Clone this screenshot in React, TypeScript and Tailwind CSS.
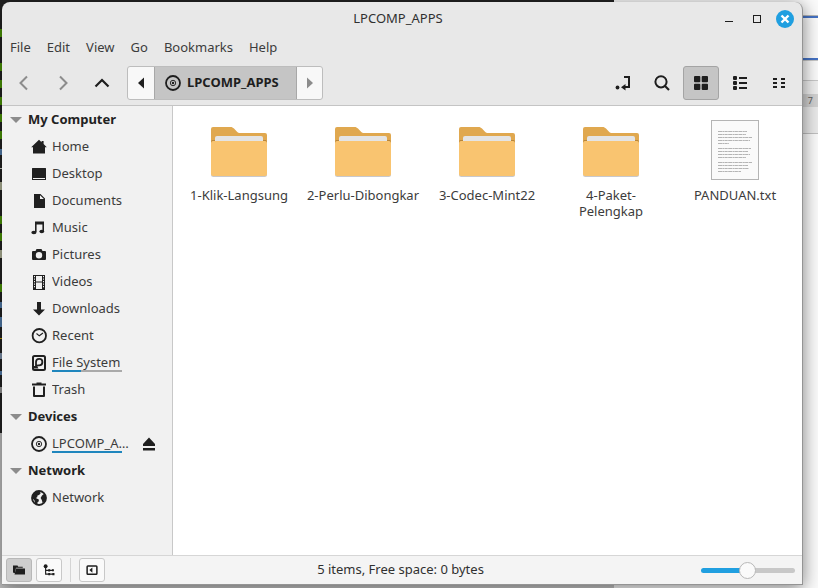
import React, { useState } from 'react';

interface IconProps {
  children: React.ReactNode;
  className?: string;
}

interface Place {
  label: string;
  icon: React.ReactNode;
  usage?: number;
  ejectable?: boolean;
}

interface Section {
  title: string;
  places: Place[];
}

const Icon: React.FC<IconProps> = ({ children, className = 'w-4 h-4' }) => (
  <svg className={`shrink-0 ${className}`} viewBox="0 0 16 16" fill="currentColor" aria-hidden="true">
    {children}
  </svg>
);

const DiscIcon = () => (
  <Icon>
    <circle cx="8" cy="8" r="7" fill="none" stroke="currentColor" strokeWidth="1.8" />
    <circle cx="8" cy="8" r="2.7" fill="none" stroke="currentColor" strokeWidth=".9" />
    <circle cx="8" cy="8" r="1.2" />
  </Icon>
);

const sections: Section[] = [
  {
    title: 'My Computer',
    places: [
      { label: 'Home', icon: <Icon><path d="M8 .8 10.6 3.2V2h2v3.1L15.8 8.3H14V14.500H2V8.3H.2z" /></Icon> },
      {
        label: 'Desktop',
        icon: (
          <Icon>
            <path fillRule="evenodd" d="M1.5 2h13a.5.5 0 0 1 .5.5v11a.5.5 0 0 1-.5.5h-13a.5.5 0 0 1-.5-.5v-11a.5.5 0 0 1 .5-.5zM2 12v1h12v-1z" />
          </Icon>
        ),
      },
      {
        label: 'Documents',
        icon: <Icon><path fillRule="evenodd" d="M3 1h6.5L14 5.5V15H3zM9 2.2V6h3.9z" /></Icon>,
      },
      {
        label: 'Music',
        icon: (
          <Icon>
            <path d="M4 1.500h9V11h-1.600V4.500H5.600V12H4z" />
            <ellipse cx="2.900" cy="12.500" rx="2.600" ry="1.800" />
            <ellipse cx="10.800" cy="11.500" rx="2.400" ry="1.800" />
          </Icon>
        ),
      },
      {
        label: 'Pictures',
        icon: (
          <Icon>
            <path fillRule="evenodd" d="M5.500 2h5l1 2H14a1 1 0 0 1 1 1v7a1 1 0 0 1-1 1H2a1 1 0 0 1-1-1V5a1 1 0 0 1 1-1h2.500zM8 5a3.200 3.200 0 1 0 0 6.400A3.200 3.200 0 0 0 8 5z" />
          </Icon>
        ),
      },
      {
        label: 'Videos',
        icon: (
          <Icon>
            <path fillRule="evenodd" d="M2 1h12v15H2zM5 2v5.500h6V2zM5 8.500V15h6V8.500zM3 2v1.200h1V2zM3 4.500v1.200h1V4.500zM3 7v1.200h1V7zM3 9.500v1.200h1V9.500zM3 12v1.200h1V12zM12 2v1.200h1V2zM12 4.500v1.200h1V4.500zM12 7v1.200h1V7zM12 9.500v1.200h1V9.500zM12 12v1.200h1V12z" />
          </Icon>
        ),
      },
      { label: 'Downloads', icon: <Icon><path d="M6 1h4v7.500h4L8 14.500 2 8.500h4z" /></Icon> },
      {
        label: 'Recent',
        icon: (
          <Icon>
            <circle cx="8.300" cy="7.700" r="6.700" fill="none" stroke="currentColor" strokeWidth="1.800" />
            <path d="m5.500 5.500 2.800 2.300L12 5" fill="none" stroke="currentColor" strokeWidth="1.100" />
          </Icon>
        ),
      },
      {
        label: 'File System',
        usage: 42,
        icon: (
          <Icon>
            <rect x="2" y="1" width="12" height="14" rx="1.500" fill="none" stroke="currentColor" strokeWidth="2" />
            <path d="M5 11V7a3.200 3.200 0 1 1 3.200 3.300H7z" fill="none" stroke="currentColor" strokeWidth="1.800" />
            <path d="M3 11h3l1.500 2.500H3z" />
          </Icon>
        ),
      },
      {
        label: 'Trash',
        icon: (
          <Icon>
            <path d="M1 1.500h4.500V.500h5v1H15V3.500H1z" />
            <path d="M3 4.500V14h10V4.500" fill="none" stroke="currentColor" strokeWidth="2" strokeLinejoin="round" />
          </Icon>
        ),
      },
    ],
  },
  {
    title: 'Devices',
    places: [{ label: 'LPCOMP_APPS', icon: <DiscIcon />, usage: 100, ejectable: true }],
  },
  {
    title: 'Network',
    places: [
      {
        label: 'Network',
        icon: (
          <Icon>
            <circle cx="8" cy="8" r="7" fill="none" stroke="currentColor" strokeWidth="1.8" />
            <path d="M1.500 5 4.500 1.500 8.500 1.200 9.600 3.400 8 5 6.500 5.600 6.200 7.200 4.800 8 7.800 9.600 7.800 11.200 6.400 12.600 6.400 15 4 13.500 3.500 10.600 1.200 8zM11 5.500l2.500-2L15 8l-1.400 3.400-2 1.600-.8-3L9.600 8z" />
          </Icon>
        ),
      },
    ],
  },
];

const folders = ['1-Klik-Langsung', '2-Perlu-Dibongkar', '3-Codec-Mint22', '4-Paket-\nPelengkap'];

const menus = ['File', 'Edit', 'View', 'Go', 'Bookmarks', 'Help'];

// slivers of the terminal's characters that show beside the window, one per line
const terminalMarks = [
  'h-2 bg-[#4e9a06]',
  'h-0',
  'h-2 bg-[#4e9a06]',
  'h-2 bg-[#4e9a06]',
  'h-2 bg-[#4e9a06]',
  'h-2 bg-[#4e9a06]',
  'h-2 bg-[#4e9a06]',
  'h-1.5 bg-[#5580b0]',
  'h-px bg-[#d3d7cf]',
  'h-2 bg-[#b5b89c]',
  'h-0',
  'h-2 bg-[#4e9a06]',
  'h-2 bg-[#4e9a06]',
  'h-2 bg-[#b5b89c]',
  'h-0',
  'h-2 bg-[#4e9a06]',
  'h-1.5 bg-[#5580b0]',
  'h-2.5 bg-[#5580b0]',
  'h-px bg-[#c4a000]',
  'h-1.5 bg-[#8296b0]',
  'h-1 bg-[#5580b0]',
  'h-1.5 bg-[#9a9a9a]',
];

const FolderIcon = () => (
  <svg className="w-16 h-16" viewBox="0 0 64 64" aria-hidden="true">
    <path d="M4 22V11a2 2 0 0 1 2-2h17.500c1.500 0 2.500.6 3.500 1.600l2.800 2.800c1 1 2 1.600 3.500 1.600H58a2 2 0 0 1 2 2v7H4z" fill="#e0a84f" />
    <path d="M4 24c0-1.500 1-2 2-2h52c1 0 2 .5 2 2v3H4z" fill="#b8863b" />
    <path d="M8 25v-5a2 2 0 0 1 2-2h44a2 2 0 0 1 2 2v5z" fill="#e4e4e4" />
    <path d="M4 55h56v1.500a2.500 2.500 0 0 1-2.500 2.500h-51A2.500 2.500 0 0 1 4 56.500z" fill="#c8c8cc" />
    <path d="M4 25a2 2 0 0 1 2-2h52a2 2 0 0 1 2 2v31a2 2 0 0 1-2 2H6a2 2 0 0 1-2-2z" fill="#f9c470" />
  </svg>
);

const TextFileIcon = () => (
  <svg className="w-16 h-16" viewBox="0 0 64 64" aria-hidden="true">
    <rect x="8.500" y="2.500" width="47" height="59" fill="#fafafa" stroke="#b4b4b4" />
    <path
      d="M15 13.500h29M15 16.500h28M15 19.500h34M15 22.500h32M15 25.500h11M15 30.500h33M15 33.500h30M15 36.500h32M15 39.500h28M15 44.500h34M15 47.500h30M15 50.500h31M15 53.500h23"
      stroke="#b4b4b4"
      strokeDasharray="4 .4 2 .3 3 .5"
    />
  </svg>
);

const Backdrop = () => (
  <div className="absolute inset-0 flex justify-between" aria-hidden="true">
    <div className="w-3/4 h-full flex flex-col bg-[#c6c6c6]">
      <div className="h-[433px] bg-[#232323] pt-6 overflow-hidden">
        {terminalMarks.map((mark, idx) => (
          <div key={idx} className="h-[17px] flex items-center">
            <span className={`w-[2px] ${mark}`} />
          </div>
        ))}
      </div>
    </div>
    <div className="w-1/4 flex flex-col bg-[#fbfbfb]">
      <div className="h-4 border-b border-[#b8b8b8]" />
      <div className="h-11 border-y-2 border-[#4472c4]" />
      <div className="h-[21px] border-y border-[#c8c8c8]" />
      <div className="h-[13px] bg-[#f0f0f0]" />
      <div className="h-[13px] bg-[#d2d2d2] flex items-center justify-end pr-[5px] text-[9px] text-[#606060]">7</div>
      <div className="h-[27px] bg-[#ebebeb] border-b border-[#c0c0c0]" />
    </div>
  </div>
);

const App: React.FC = () => {
  const [zoom, setZoom] = useState(49);

  return (
    <div className="relative h-screen overflow-hidden pt-[2px] pr-[15px] pb-[3px] pl-[2px] font-['Noto_Sans','Open_Sans',sans-serif] text-[13px] text-[#3c3c3c]">
      <Backdrop />
      <div className="relative h-full flex flex-col bg-[#e8e8e8] rounded-t-lg border-r border-b border-[#949494] shadow-[0_3px_18px_rgba(0,0,0,0.5)] overflow-hidden">
        <header className="h-[33px] shrink-0 grid grid-cols-[1fr_auto_1fr] items-center pr-2">
          <span />
          <h1 className="text-[#303030]">LPCOMP_APPS</h1>
          <div className="flex justify-end items-center gap-2.5 text-[#1e1e1e]">
            <button aria-label="Minimize" className="w-[18px] h-[18px] flex items-center justify-center">
              <svg width="18" height="18" viewBox="0 0 18 18"><path d="M5 11.500h8" stroke="currentColor" /></svg>
            </button>
            <button aria-label="Maximize" className="w-[18px] h-[18px] flex items-center justify-center">
              <svg width="18" height="18" viewBox="0 0 18 18"><rect x="5.500" y="5.500" width="7" height="7" fill="none" stroke="currentColor" /></svg>
            </button>
            <button aria-label="Close" className="w-[18px] h-[18px] rounded-full bg-[#209fe0] flex items-center justify-center text-white">
              <svg width="18" height="18" viewBox="0 0 18 18"><path d="m5.500 5.500 7 7m0-7-7 7" stroke="currentColor" strokeWidth="2.400" /></svg>
            </button>
          </div>
        </header>

        <nav className="h-[26px] shrink-0 flex items-center gap-4 px-2">
          {menus.map((menu) => (
            <button key={menu}>{menu}</button>
          ))}
        </nav>

        <div className="h-[45px] shrink-0 flex items-center pl-1 pr-[5px] border-b border-[#c4c4c4] text-[#1e1e1e]">
          <div className="flex gap-[3px] mr-[7px]">
            <button aria-label="Back" className="w-9 h-[34px] flex items-center justify-center text-[#8c8c8c]">
              <Icon><path d="m11 1.500-6.500 6.500 6.500 6.500" fill="none" stroke="currentColor" strokeWidth="2" /></Icon>
            </button>
            <button aria-label="Forward" className="w-9 h-[34px] flex items-center justify-center text-[#8c8c8c]">
              <Icon><path d="m5 1.500 6.500 6.500L5 14.500" fill="none" stroke="currentColor" strokeWidth="2" /></Icon>
            </button>
            <button aria-label="Up" className="w-9 h-[34px] flex items-center justify-center">
              <Icon><path d="m1.500 11.500 6.500-6.500 6.500 6.500" fill="none" stroke="currentColor" strokeWidth="2.200" /></Icon>
            </button>
          </div>

          <div className="h-[34px] flex rounded-[3px] border border-[#bdbdbd] bg-[#f8f8f8] overflow-hidden">
            <button aria-label="Previous folders" className="w-[26px] flex items-center justify-center">
              <Icon><path d="M11 2.500v11L5 8z" /></Icon>
            </button>
            <button className="w-[143px] flex items-center gap-1.5 pl-2.5 bg-[#c5c5c5] border-x border-[#a8a8a8] font-bold">
              <DiscIcon />
              LPCOMP_APPS
            </button>
            <button aria-label="Next folders" className="w-[25px] flex items-center justify-center text-[#8c8c8c]">
              <Icon><path d="M5 2.500v11L11 8z" /></Icon>
            </button>
          </div>

          <div className="ml-auto flex gap-[3px]">
            <button aria-label="Toggle location entry" className="w-9 h-[34px] flex items-center justify-center">
              <Icon>
                <path d="M9 2h5v10H9" fill="none" stroke="currentColor" strokeWidth="2" />
                <path d="M10.500 9v6.500L6 12.200z" />
                <circle cx="2.500" cy="12.500" r="1.900" />
              </Icon>
            </button>
            <button aria-label="Search" className="w-9 h-[34px] flex items-center justify-center">
              <Icon>
                <circle cx="7" cy="6.800" r="5.600" fill="none" stroke="currentColor" strokeWidth="2" />
                <path d="m11 11 4 4" stroke="currentColor" strokeWidth="2.200" />
              </Icon>
            </button>
            <button aria-label="Icon view" className="w-9 h-[34px] flex items-center justify-center rounded-[3px] border border-[#a4a4a4] bg-[#c5c5c5]">
              <Icon>
                <rect x="1" y="1" width="6.300" height="6.300" rx="1" />
                <rect x="8.700" y="1" width="6.300" height="6.300" rx="1" />
                <rect x="1" y="8.700" width="6.300" height="6.300" rx="1" />
                <rect x="8.700" y="8.700" width="6.300" height="6.300" rx="1" />
              </Icon>
            </button>
            <button aria-label="List view" className="w-9 h-[34px] flex items-center justify-center">
              <Icon>
                <rect x="1" y="1" width="4" height="4" rx="1" />
                <rect x="1" y="6" width="4" height="4" rx="1" />
                <rect x="1" y="11" width="4" height="4" rx="1" />
                <path d="M7 2h8v2H7zM7 7h8v2H7zM7 12h8v2H7z" />
              </Icon>
            </button>
            <button aria-label="Compact view" className="w-9 h-[34px] flex items-center justify-center">
              <Icon>
                <path d="M2 3h4v2H2zM2 7h4v2H2zM2 11h4v2H2zM10 3h4v2h-4zM10 7h4v2h-4zM10 11h4v2h-4z" />
              </Icon>
            </button>
          </div>
        </div>

        <div className="flex-1 min-h-0 flex">
          <aside className="w-[171px] shrink-0 bg-[#f1f1f1] border-r border-[#c8c8c8] overflow-hidden">
            {sections.map((section) => (
              <section key={section.title}>
                <h2 className="h-[27px] flex items-center gap-1.5 pl-2 font-bold text-[#222222]">
                  <svg className="w-3 h-1.5" viewBox="0 0 12 6" aria-hidden="true"><path d="M0 0h12L6 6z" fill="#8c8c8c" /></svg>
                  {section.title}
                </h2>
                <ul>
                  {section.places.map((place) => (
                    <li key={place.label} className="h-[27px] flex items-center pl-[29px] text-[#202020]">
                      {place.icon}
                      <a href="#" className="relative ml-[5px] w-[82px] shrink-0 text-[#3c3c3c]">
                        <span className="block truncate">{place.label}</span>
                        {place.usage && (
                          <span className="absolute left-0 bottom-0 w-[70px] h-[2px] bg-[#aaaaaa]">
                            <span className="block h-full bg-[#1f86bd]" style={{ width: `${place.usage}%` }} />
                          </span>
                        )}
                      </a>
                      {place.ejectable && (
                        <button aria-label="Eject" className="ml-[7px]">
                          <Icon><path d="M8 1.500 14 8v2H2V8zM2 12h12v2.500H2z" /></Icon>
                        </button>
                      )}
                    </li>
                  ))}
                </ul>
              </section>
            ))}
          </aside>

          <main className="flex-1 bg-white pt-3 pl-1 overflow-hidden">
            <div className="grid grid-cols-[repeat(auto-fill,124px)]">
              {folders.map((name) => (
                <button key={name} className="flex flex-col items-center">
                  <FolderIcon />
                  <span className="mt-[5px] leading-4 whitespace-pre-line">{name}</span>
                </button>
              ))}
              <button className="flex flex-col items-center">
                <TextFileIcon />
                <span className="mt-[5px] leading-4">PANDUAN.txt</span>
              </button>
            </div>
          </main>
        </div>

        <footer className="h-[29px] shrink-0 flex items-center bg-[#f4f4f4] border-t border-[#d6d6d6] px-1 text-[#1e1e1e]">
          <div className="flex-1 flex items-center gap-1">
            <button aria-label="Places" className="w-[26px] h-6 flex items-center justify-center rounded-[3px] border border-[#b8b8b8] bg-[#cecece]">
              <Icon className="w-3 h-3">
                <path d="M0 2h6l1 1.500h6V5H4L2.500 12H1l-1-1z" />
                <path d="M4 6h12v8H2z" />
              </Icon>
            </button>
            <button aria-label="Treeview" className="w-[26px] h-6 flex items-center justify-center rounded-[3px] border border-[#c8c8c8] bg-[#fafafa]">
              <Icon className="w-3 h-3">
                <circle cx="3.500" cy="3" r="2.600" />
                <path d="M3.500 3v10.500H14M3.500 8.500h10" fill="none" stroke="currentColor" strokeWidth="1.500" />
                <path d="M7 7h2.500v3H7zM12 7h2.500v2.800H12zM7 12h2.500v3H7zM12.500 12h2.800v3h-2.800z" />
              </Icon>
            </button>
            <span className="w-px h-6 mx-1 bg-[#d4d4d4]" />
            <button aria-label="Hide sidebar" className="w-[26px] h-6 flex items-center justify-center rounded-[3px] border border-[#c8c8c8] bg-[#fafafa]">
              <Icon className="w-3 h-3">
                <rect x="1.500" y="2.500" width="13" height="11" rx="1" fill="none" stroke="currentColor" strokeWidth="2" />
                <path d="M8.500 4.500v7L4.500 8z" />
              </Icon>
            </button>
          </div>
          <p className="text-[#303030]">5 items, Free space: 0 bytes</p>
          <div className="flex-1 flex items-center justify-end pr-[3px]">
            <input
              type="range"
              aria-label="Zoom level"
              value={zoom}
              onChange={(e) => setZoom(Number(e.target.value))}
              style={{ backgroundImage: `linear-gradient(to right, #209fe0 ${zoom}%, #c8c8c8 ${zoom}%)` }}
              className="w-[94px] h-[5px] rounded-full appearance-none [&::-webkit-slider-thumb]:appearance-none [&::-webkit-slider-thumb]:w-[17px] [&::-webkit-slider-thumb]:h-[17px] [&::-webkit-slider-thumb]:rounded-full [&::-webkit-slider-thumb]:bg-[#fafafa] [&::-webkit-slider-thumb]:border [&::-webkit-slider-thumb]:border-[#b8b8b8]"
            />
          </div>
        </footer>
      </div>
    </div>
  );
};

export default App;
